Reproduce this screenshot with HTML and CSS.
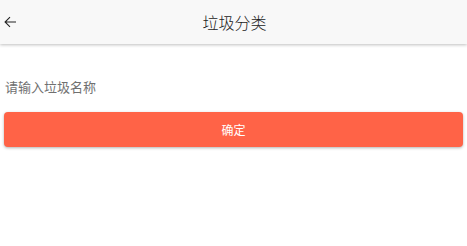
FILE: index.html
```html
<!DOCTYPE html>
<html>
<head>
<meta charset="utf-8">
<link rel="stylesheet" href="styles.css">
</head>
<body>
<header class="appbar">
  <div class="back">
    <svg width="18" height="18" viewBox="0 0 24 24"><path d="M20 11.2H7.2l5.3-5.3-1-1L4.4 12l7.1 7.1 1-1-5.3-5.3H20z" fill="#222"/></svg>
  </div>
  <div class="title">垃圾分类</div>
</header>
<main class="content">
  <div class="field">请输入垃圾名称</div>
  <button class="btn">确定</button>
</main>
</body>
</html>
```
FILE: styles.css
```css
* { box-sizing: border-box; }
body {
  margin: 0;
  width: 467px;
  height: 246px;
  background: #fff;
  font-family: "Noto Sans CJK SC", "Noto Sans", sans-serif;
  overflow: hidden;
}
.appbar {
  height: 44px;
  background: #f8f8f8;
  box-shadow: 0 1px 3px rgba(0,0,0,0.25);
  display: flex;
  align-items: center;
  position: relative;
}
.back {
  width: 26px;
  padding-left: 1px;
  display: flex;
  align-items: center;
}
.title {
  position: absolute;
  left: 0; right: 0;
  text-align: center;
  font-size: 16px;
  font-weight: 300;
  color: #222;
  padding-left: 2px;
  pointer-events: none;
}
.content {
  padding: 0 4px;
}
.field {
  margin-top: 33px;
  padding-left: 1px;
  font-size: 13px;
  line-height: 20px;
  color: #707070;
}
.btn {
  margin-top: 15px;
  width: 459px;
  height: 35px;
  border: none;
  border-radius: 4px;
  background: #ff6347;
  color: #fff;
  font-family: inherit;
  font-size: 12px;
  box-shadow: 0 1px 3px rgba(0,0,0,0.3);
  display: block;
}
```
